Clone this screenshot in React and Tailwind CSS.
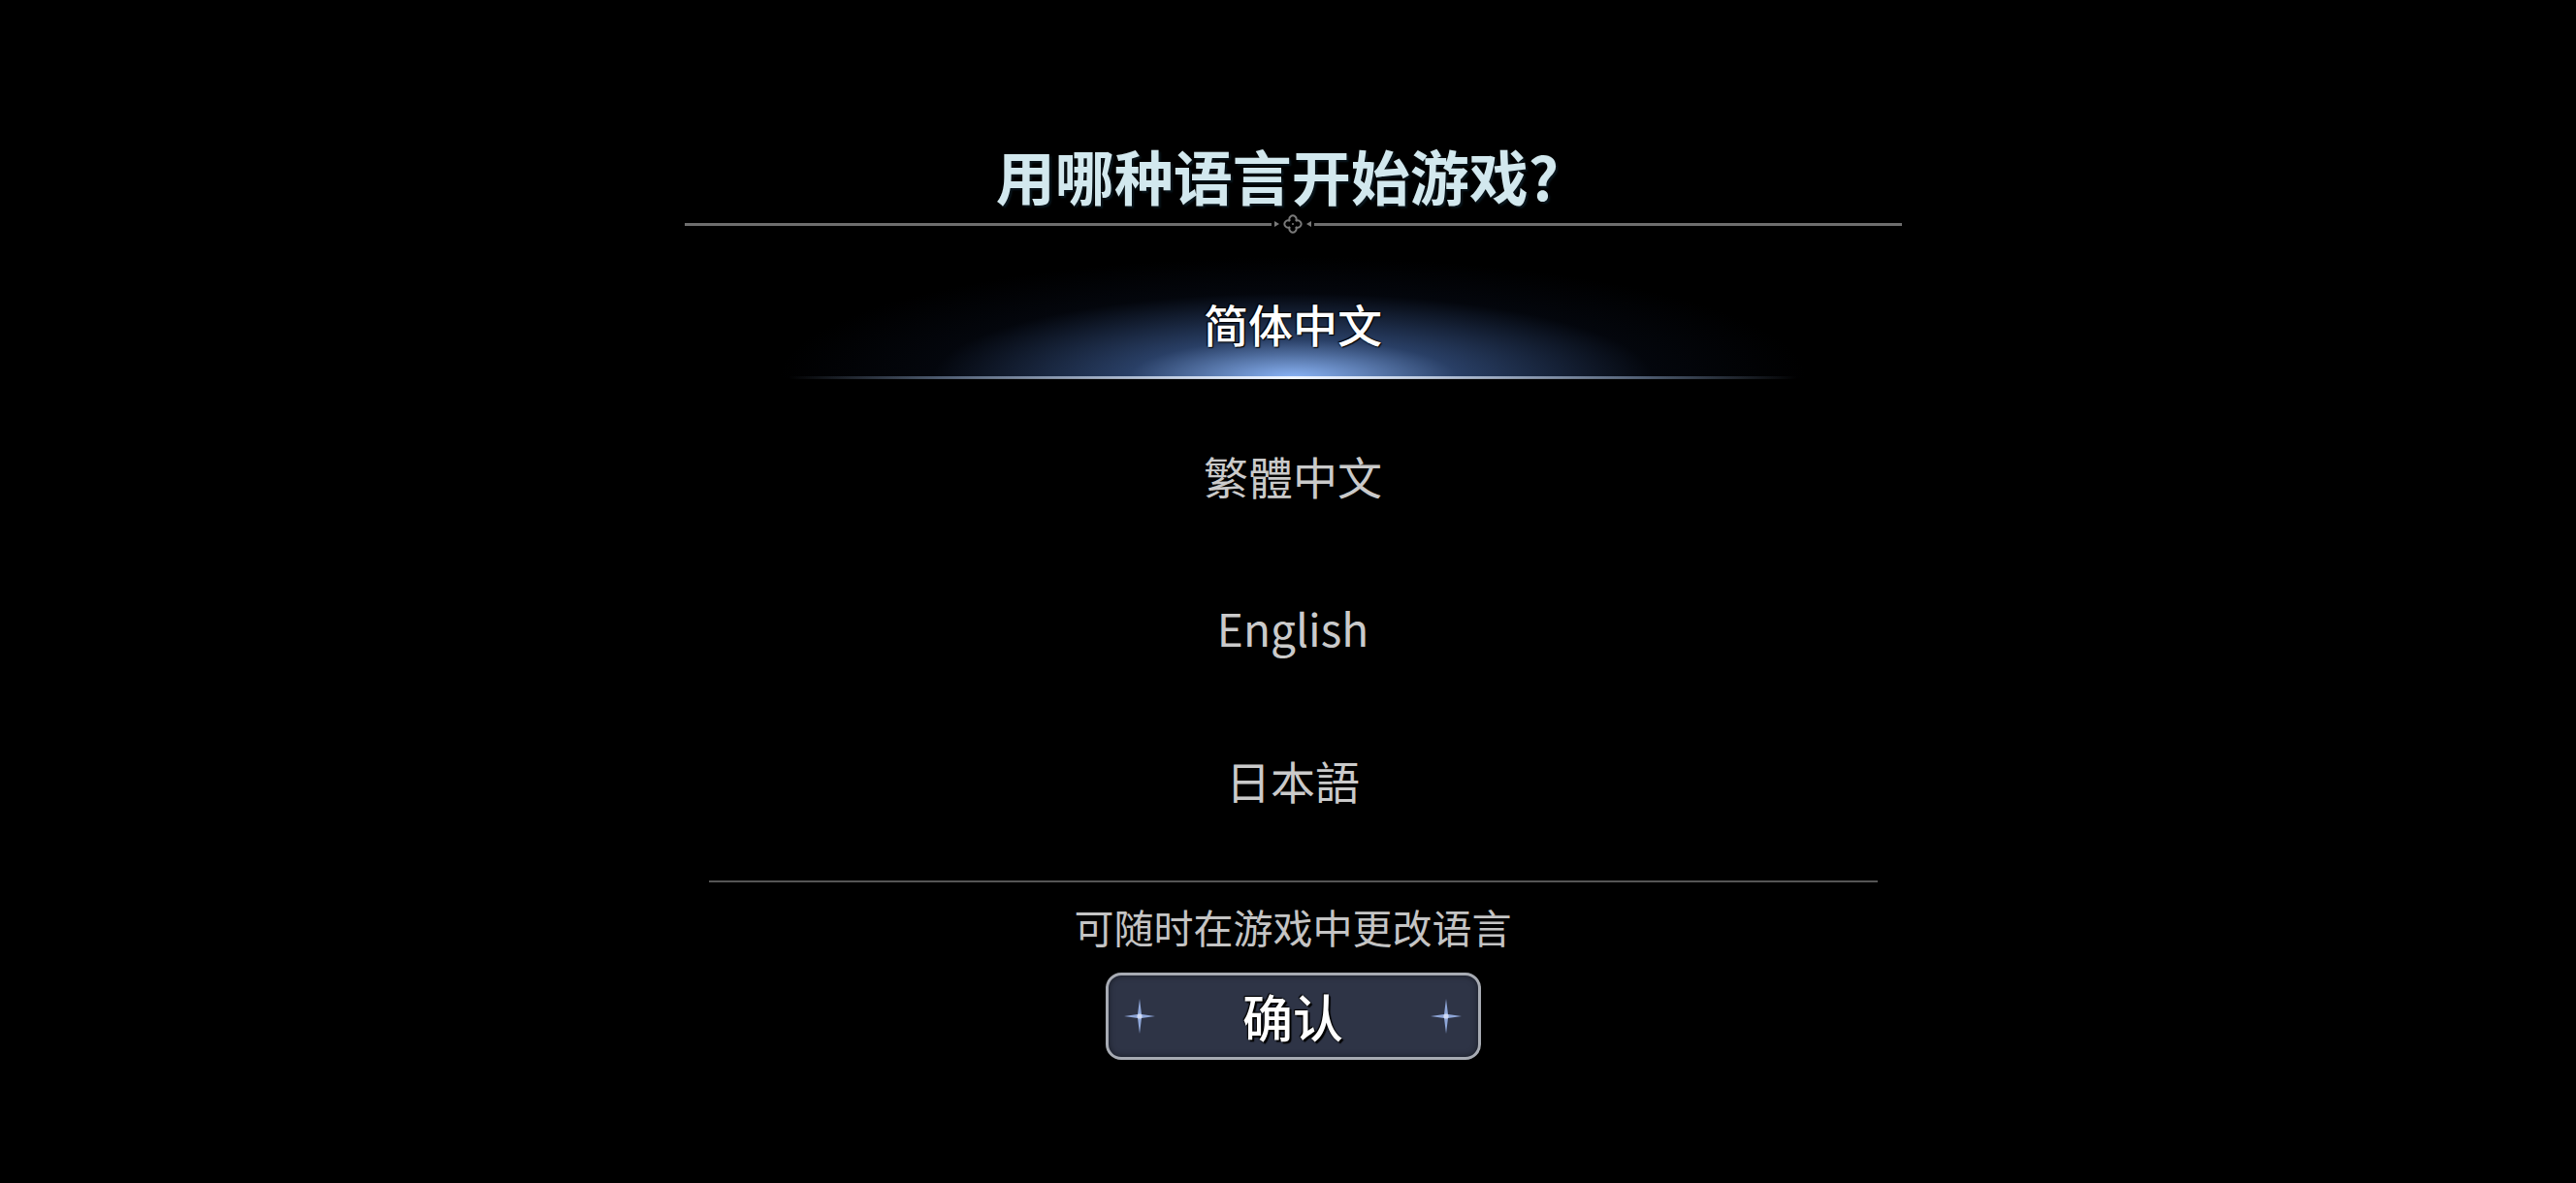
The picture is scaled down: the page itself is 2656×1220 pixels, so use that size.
import React from 'react';

const FONT = "font-['Noto_Sans_CJK_SC','Noto_Sans',sans-serif]";

const LANGS = [
  { id: 'zh-hans', label: '简体中文' },
  { id: 'zh-hant', label: '繁體中文' },
  { id: 'en', label: 'English' },
  { id: 'ja', label: '日本語' },
];

function Ornament() {
  return (
    <svg width="44" height="24" viewBox="0 0 44 24" className="shrink-0">
      <path d="M3 9 L8 12 L3 15 Z" fill="#7a7a7a" />
      <path d="M41 9 L36 12 L41 15 Z" fill="#7a7a7a" />
      <path
        d="M19 9 A3.6 3.6 0 1 1 25 9 A3.6 3.6 0 1 1 25 15 A3.6 3.6 0 1 1 19 15 A3.6 3.6 0 1 1 19 9 Z"
        fill="none"
        stroke="#7a7a7a"
        strokeWidth="1.8"
      />
      <circle cx="22" cy="12" r="1" fill="#7a7a7a" />
    </svg>
  );
}

function Sparkle() {
  return (
    <svg width="32" height="36" viewBox="0 0 32 36">
      <path
        d="M16 0 L18 16 L32 18 L18 20 L16 36 L14 20 L0 18 L14 16 Z"
        fill="#8ea6d8"
      />
      <circle cx="16" cy="18" r="2.6" fill="#cfdaf4" />
    </svg>
  );
}

function LanguageOption({ label, selected }) {
  return (
    <div className="relative flex h-[157px] w-[1100px] items-center justify-center">
      {selected && (
        <>
          <div className="pointer-events-none absolute bottom-[21px] left-1/2 h-[125px] w-[1060px] -translate-x-1/2 bg-[radial-gradient(ellipse_50%_100%_at_50%_100%,rgba(140,182,248,1)_0%,rgba(75,115,185,0.55)_32%,rgba(20,35,70,0.18)_70%,transparent_100%)]" />
          <div className="pointer-events-none absolute bottom-[20px] left-1/2 h-[3px] w-[1040px] -translate-x-1/2 bg-[linear-gradient(90deg,transparent_0%,rgba(150,175,210,0.5)_15%,#eef4ff_50%,rgba(150,175,210,0.5)_85%,transparent_100%)]" />
        </>
      )}
      <span
        className={`relative text-[46px] leading-none ${
          selected
            ? 'font-medium text-white [text-shadow:0_0_2px_#000,1px_1px_1px_#000,-1px_-1px_1px_#000]'
            : 'text-[#cacaca]'
        }`}
      >
        {label}
      </span>
    </div>
  );
}

export default function App() {
  return (
    <div className={`flex h-[1220px] w-full flex-col items-center bg-black pl-[10px] pt-[141px] ${FONT}`}>
      <h1 className="mr-[32px] text-[61px] font-bold leading-[80px] text-[#d2e8ee] [text-shadow:0_0_2px_#000,2px_2px_2px_#0b1a22]">
        用哪种语言开始游戏?
      </h1>

      <div className="flex h-[20px] w-[1255px] items-center">
        <div className="h-[3px] flex-1 bg-[#6e6e6e]" />
        <Ornament />
        <div className="h-[3px] flex-1 bg-[#6e6e6e]" />
      </div>

      <div className="mt-[13px] flex flex-col items-center">
        {LANGS.map((l, i) => (
          <LanguageOption key={l.id} label={l.label} selected={i === 0} />
        ))}
      </div>

      <div className="mt-[26px] h-[2px] w-[1205px] bg-[#555555]" />

      <p className="mt-[21px] text-[41px] leading-[48px] text-[#c4c4c4]">可随时在游戏中更改语言</p>

      <button className="mt-[24px] flex h-[90px] w-[387px] items-center justify-between rounded-[16px] border-[3px] border-[#a7abb3] bg-[#2e3446] px-[16px] shadow-[inset_0_0_6px_rgba(0,0,0,0.5)]">
        <Sparkle />
        <span className="text-[52px] font-medium leading-none text-white [text-shadow:0_0_2px_#000,2px_2px_1px_#000,-1px_-1px_1px_#000]">
          确认
        </span>
        <Sparkle />
      </button>
    </div>
  );
}
